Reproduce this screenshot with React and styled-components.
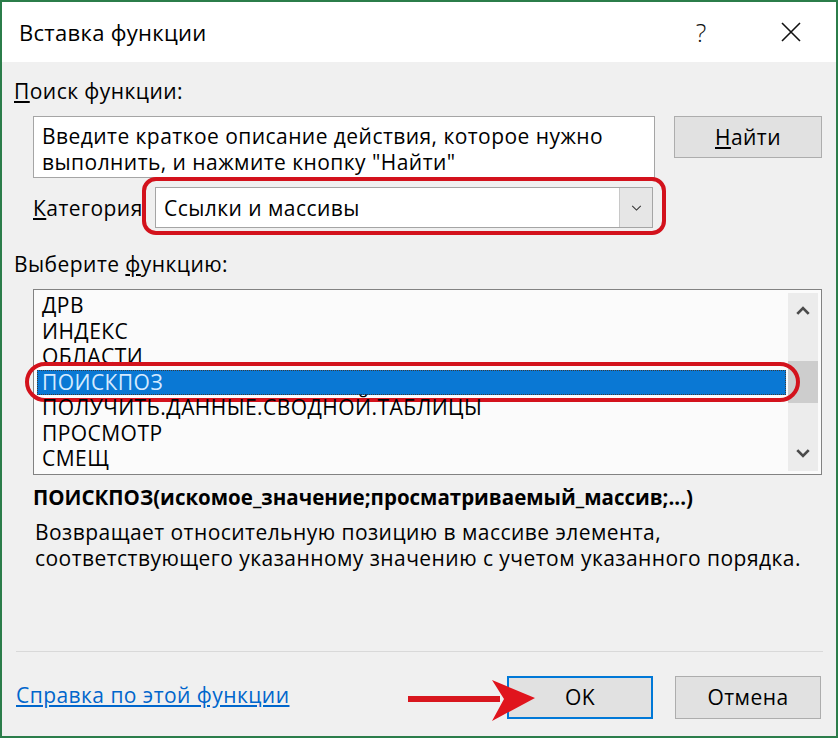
import React from "react";
import styled, { createGlobalStyle } from "styled-components";

const GlobalStyle = createGlobalStyle`
  html, body { margin: 0; padding: 0; background: #f0f0f0; }
  body { font-family: "Open Sans", "Noto Sans", sans-serif; color: #000; }
  * { box-sizing: border-box; }
`;

const textStyle = `
  font-size: 21px;
  letter-spacing: 0.45px;
  line-height: 26px;
`;

const Dialog = styled.div`
  width: 838px;
  height: 738px;
  border: 2px solid #2b7d4a;
  background: #f0f0f0;
  display: flex;
  flex-direction: column;
  overflow: hidden;
`;

const TitleBar = styled.div`
  height: 60px;
  background: #ffffff;
  display: flex;
  align-items: center;
  padding-left: 17px;
  flex-shrink: 0;
`;

const Title = styled.div`
  flex: 1;
  font-size: 22px;
  letter-spacing: 0.3px;
  line-height: 26px;
  padding-bottom: 1px;
`;

const TitleButton = styled.div`
  width: 90px;
  height: 60px;
  display: flex;
  align-items: center;
  justify-content: center;
  font-size: 25px;
  font-weight: 300;
  color: #111;
`;

const Body = styled.div`
  flex: 1;
  display: flex;
  flex-direction: column;
  padding: 0 14px 0 12px;
`;

const SectionLabel = styled.div`
  ${textStyle}
  margin-top: ${(p) => p.$mt}px;
`;

const SearchRow = styled.div`
  display: flex;
  align-items: flex-start;
  gap: 19px;
  margin-top: 12px;
  padding-left: 19px;
`;

const SearchBox = styled.div`
  width: 622px;
  height: 62px;
  background: #fff;
  border: 1px solid #a5a5a5;
  padding: 6px 8px 0 8px;
  ${textStyle}
`;

const DialogButton = styled.div`
  width: ${(p) => p.$w}px;
  height: ${(p) => p.$h}px;
  background: #e1e1e1;
  border: ${(p) => (p.$primary ? "2px solid #0078d7" : "1px solid #adadad")};
  display: flex;
  align-items: center;
  justify-content: center;
  ${textStyle}
  position: relative;
`;

const CategoryRow = styled.div`
  display: flex;
  align-items: center;
  margin-top: 9px;
  padding-left: 19px;
  height: 41px;
`;

const CategoryLabel = styled.div`
  width: 122px;
  ${textStyle}
`;

const Select = styled.div`
  position: relative;
  width: 498px;
  height: 41px;
  background: #fff;
  border: 1px solid #a5a5a5;
  display: flex;
  align-items: center;
`;

const SelectValue = styled.div`
  flex: 1;
  padding-left: 8px;
  ${textStyle}
`;

const SelectArrow = styled.div`
  width: 33px;
  height: 100%;
  background: #e6e6e6;
  border-left: 1px solid #c8c8c8;
  display: flex;
  align-items: center;
  justify-content: center;
`;

const RedRing = styled.div`
  position: absolute;
  top: ${(p) => p.$t}px;
  left: ${(p) => p.$l}px;
  right: ${(p) => p.$r}px;
  bottom: ${(p) => p.$b}px;
  border: 4.5px solid #d3121c;
  border-radius: ${(p) => p.$radius}px;
  pointer-events: none;
`;

const ListBox = styled.div`
  margin-top: 12px;
  margin-left: 19px;
  height: 186px;
  background: #fbfbfb;
  border: 1px solid #828282;
  padding: 3px;
  display: flex;
  gap: 2px;
`;

const Items = styled.div`
  flex: 1;
  display: flex;
  flex-direction: column;
`;

const Item = styled.div`
  position: relative;
  height: 25.5px;
  padding-left: 5px;
  ${textStyle}
  line-height: 25.5px;
  white-space: nowrap;
  background: ${(p) => (p.$selected ? "#0a78d4" : "transparent")};
  color: ${(p) => (p.$selected ? "#d4eaff" : "#000")};
  outline: ${(p) => (p.$selected ? "1px dotted #3a3a3a" : "none")};
  outline-offset: -1px;
`;

const ScrollBar = styled.div`
  width: 30px;
  background: #ececec;
  display: flex;
  flex-direction: column;
`;

const ScrollArrow = styled.div`
  height: 36px;
  display: flex;
  align-items: center;
  justify-content: center;
`;

const ScrollTrack = styled.div`
  flex: 1;
  padding-top: 32px;
`;

const Thumb = styled.div`
  height: 42px;
  background: #cdcdcd;
`;

const Signature = styled.div`
  margin-top: 9px;
  padding-left: 19px;
  font-size: 20.5px;
  font-weight: 700;
  line-height: 26px;
`;

const Description = styled.div`
  margin-top: 9px;
  padding-left: 21px;
  ${textStyle}
`;

const Separator = styled.div`
  height: 1px;
  background: #d9d9d9;
  margin: 0 13px 0 14px;
  flex-shrink: 0;
`;

const Footer = styled.div`
  height: 84px;
  display: flex;
  align-items: center;
  padding: 6px 15px 0 14px;
  flex-shrink: 0;
`;

const HelpLink = styled.a`
  flex: 1;
  color: #0066cc;
  text-decoration: underline;
  ${textStyle}
  margin-top: -4px;
`;

const Buttons = styled.div`
  display: flex;
  gap: 22px;
`;

const Arrow = styled.svg`
  position: absolute;
  left: -102px;
  top: 1px;
  overflow: visible;
`;

const Chevron = ({ dir = "down", w = 12, h = 7, color = "#555", sw = 1.6 }) => (
  <svg width={w} height={h} viewBox="0 0 12 7" overflow="visible">
    <polyline
      points={dir === "down" ? "1,1 6,6 11,1" : "1,6 6,1 11,6"}
      fill="none"
      stroke={color}
      strokeWidth={sw}
    />
  </svg>
);

const items = [
  "ДРВ",
  "ИНДЕКС",
  "ОБЛАСТИ",
  "ПОИСКПОЗ",
  "ПОЛУЧИТЬ.ДАННЫЕ.СВОДНОЙ.ТАБЛИЦЫ",
  "ПРОСМОТР",
  "СМЕЩ",
];

export default function App() {
  return (
    <>
      <GlobalStyle />
      <Dialog>
        <TitleBar>
          <Title>Вставка функции</Title>
          <TitleButton>?</TitleButton>
          <TitleButton>
            <svg width="22" height="22" viewBox="0 0 22 22">
              <path d="M2 2 L20 20 M20 2 L2 20" stroke="#111" strokeWidth="1.6" />
            </svg>
          </TitleButton>
        </TitleBar>
        <Body>
          <SectionLabel $mt={16}>
            <u>П</u>оиск функции:
          </SectionLabel>
          <SearchRow>
            <SearchBox>
              Введите краткое описание действия, которое нужно
              <br />
              выполнить, и нажмите кнопку "Найти"
            </SearchBox>
            <DialogButton $w={148} $h={42}>
              <span>
                <u>Н</u>айти
              </span>
            </DialogButton>
          </SearchRow>
          <CategoryRow>
            <CategoryLabel>
              <u>К</u>атегория
            </CategoryLabel>
            <Select>
              <SelectValue>Ссылки и массивы</SelectValue>
              <SelectArrow>
                <Chevron w={11} h={6} color="#333" sw={1.2} />
              </SelectArrow>
              <RedRing $t={-11} $l={-14} $r={-14} $b={-8} $radius={14} />
            </Select>
          </CategoryRow>
          <SectionLabel $mt={23}>
            Выберите <u>ф</u>ункцию:
          </SectionLabel>
          <ListBox>
            <Items>
              {items.map((it) => (
                <Item key={it} $selected={it === "ПОИСКПОЗ"}>
                  {it}
                  {it === "ПОИСКПОЗ" && (
                    <RedRing $t={-8} $l={-12} $r={-14} $b={-7} $radius={20} />
                  )}
                </Item>
              ))}
            </Items>
            <ScrollBar>
              <ScrollArrow>
                <Chevron dir="up" w={14} h={8} color="#4a4a4a" sw={2.4} />
              </ScrollArrow>
              <ScrollTrack>
                <Thumb />
              </ScrollTrack>
              <ScrollArrow>
                <Chevron dir="down" w={14} h={8} color="#4a4a4a" sw={2.4} />
              </ScrollArrow>
            </ScrollBar>
          </ListBox>
          <Signature>ПОИСКПОЗ(искомое_значение;просматриваемый_массив;...)</Signature>
          <Description>
            Возвращает относительную позицию в массиве элемента,
            <br />
            соответствующего указанному значению с учетом указанного порядка.
          </Description>
        </Body>
        <Separator />
        <Footer>
          <HelpLink href="#">Справка по этой функции</HelpLink>
          <Buttons>
            <DialogButton $w={146} $h={43} $primary>
              OK
              <Arrow width="128" height="42" viewBox="0 0 128 42">
                <rect x="1" y="17" width="92" height="6" fill="#d8161e" />
                <polygon points="128,19 85,1 97,20 85,42" fill="#e0141d" />
              </Arrow>
            </DialogButton>
            <DialogButton $w={146} $h={43}>
              Отмена
            </DialogButton>
          </Buttons>
        </Footer>
      </Dialog>
    </>
  );
}
